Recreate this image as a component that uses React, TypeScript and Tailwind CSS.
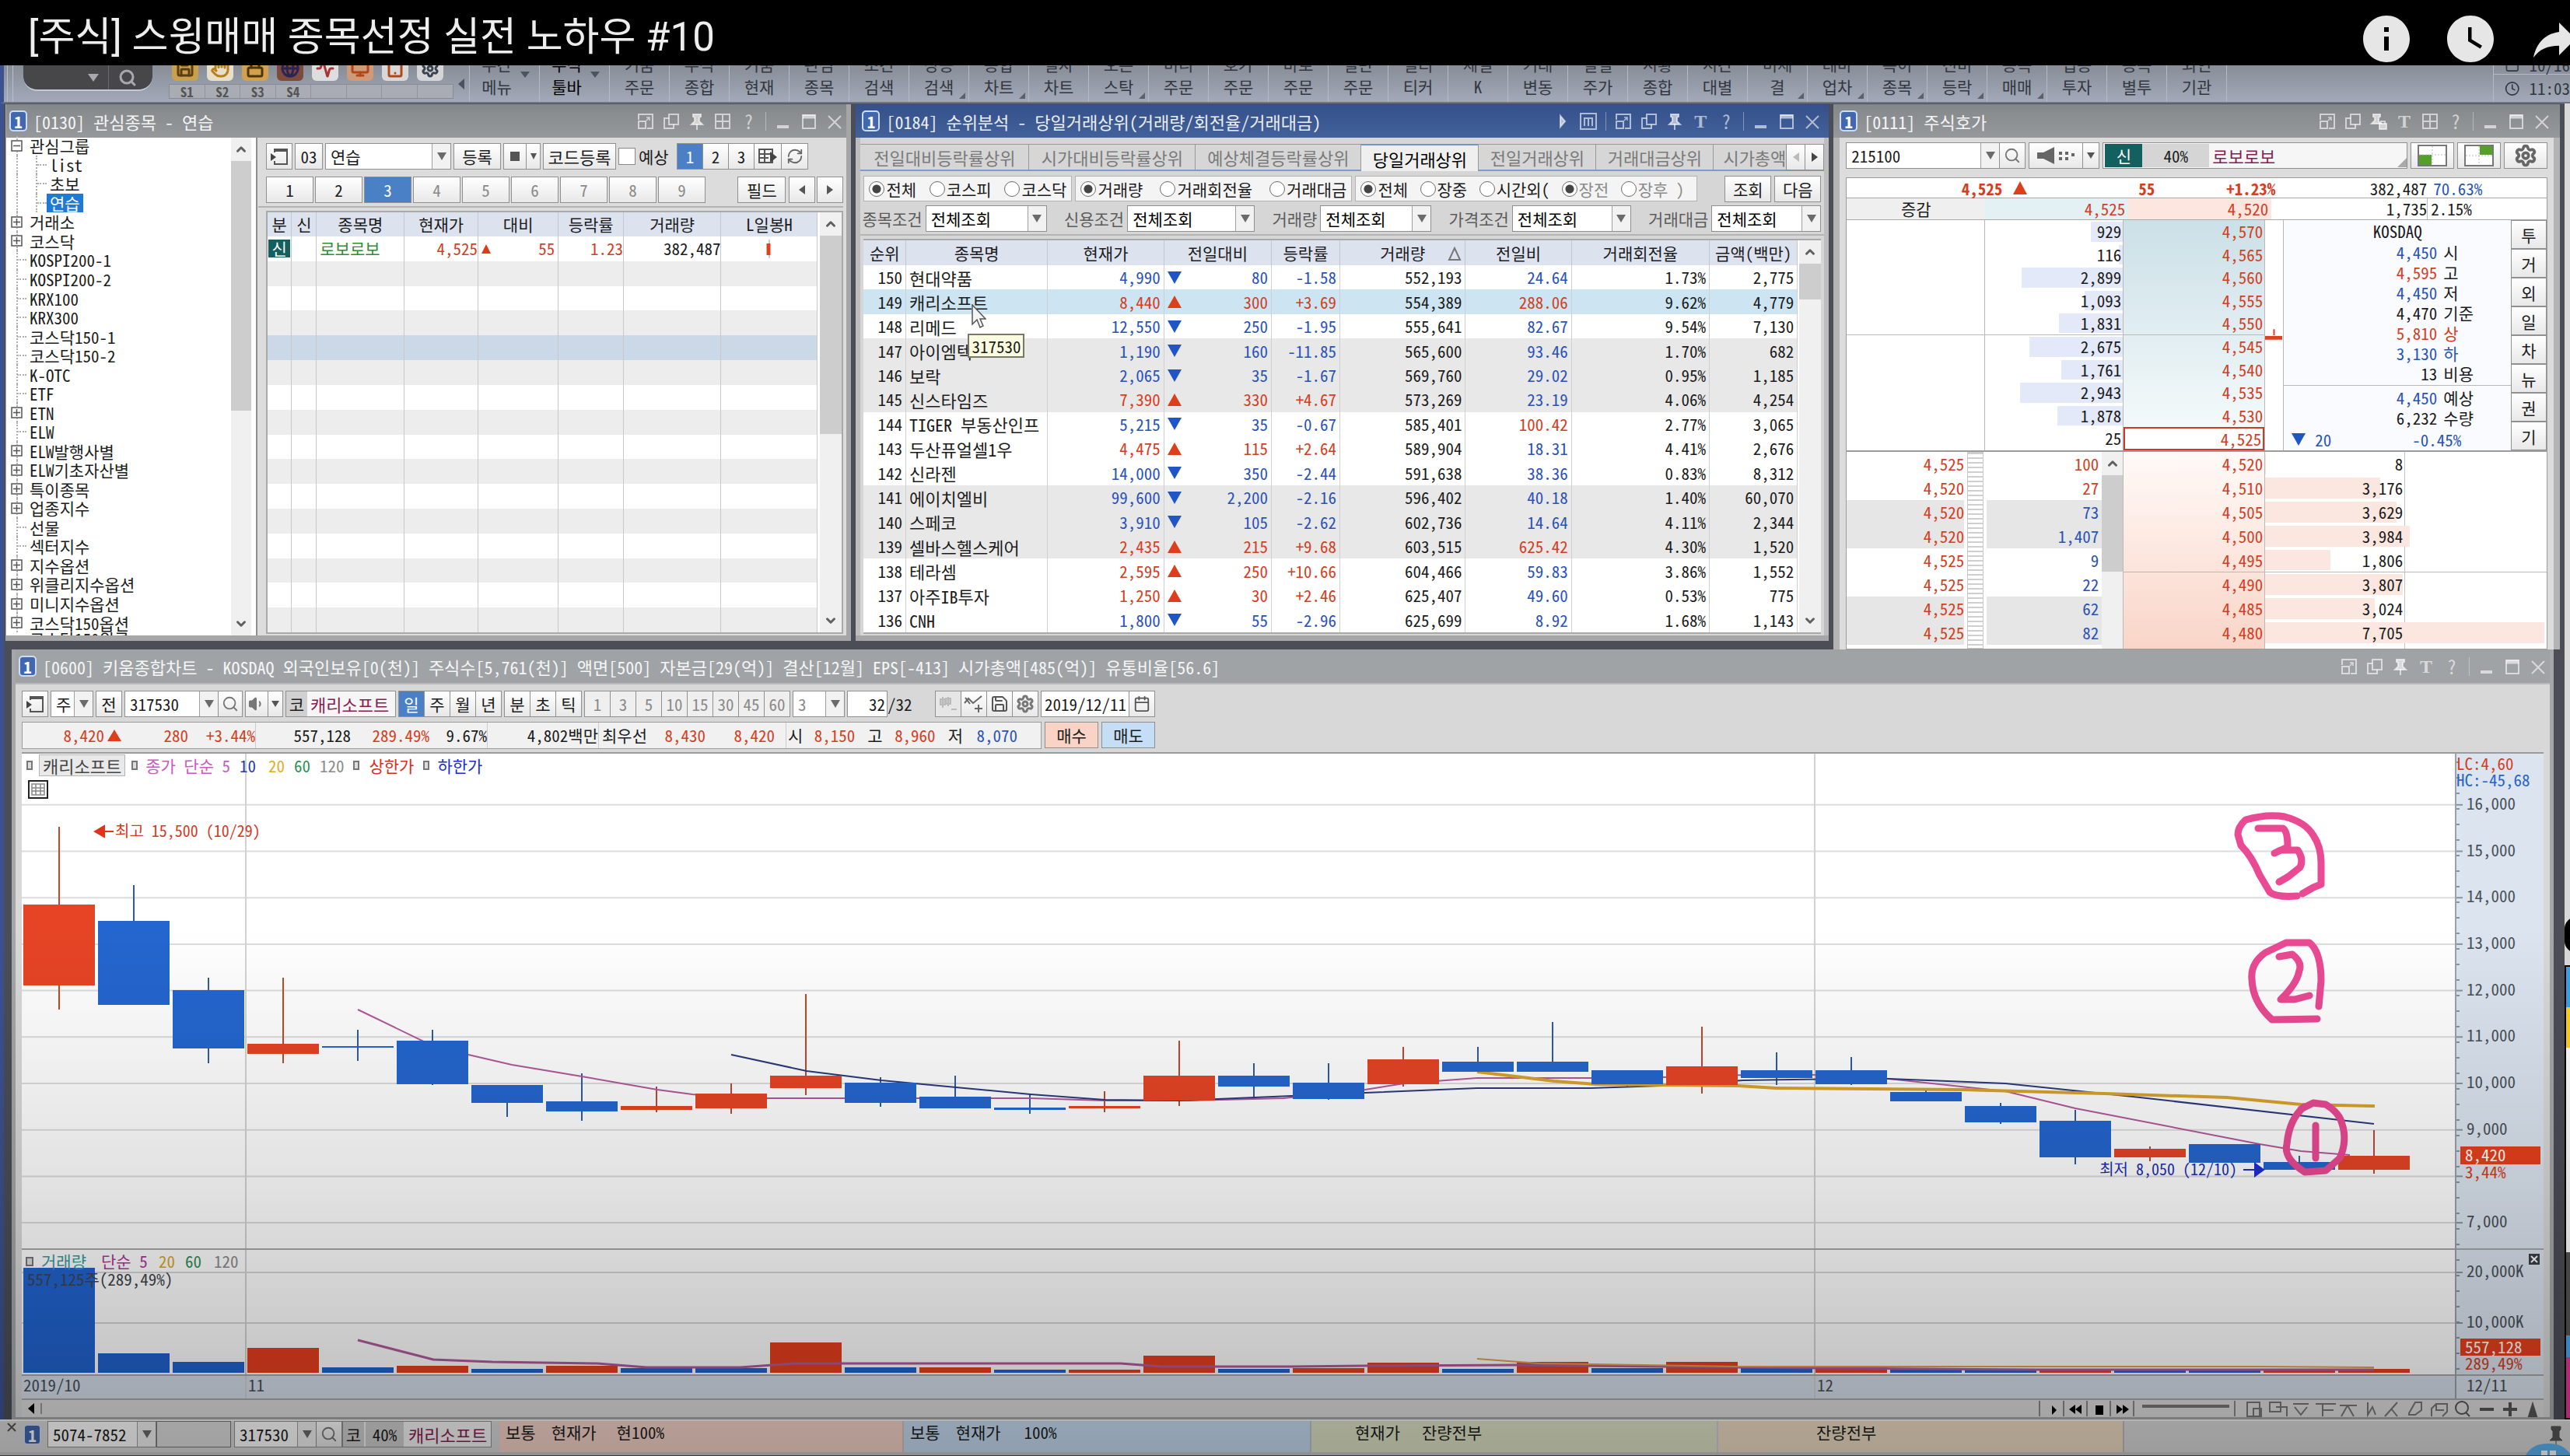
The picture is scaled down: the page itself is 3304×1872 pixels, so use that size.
import type { ReactNode } from 'react'
import clsx from 'clsx'
import {
  Activity, Calendar, ChevronDown, ChevronUp, Clock, Globe, Hand, Lock, Monitor,
  RefreshCw, Save, Search, Settings, Tablet, Volume1,
} from 'lucide-react'
import { MdInfo, MdWatchLater } from 'react-icons/md'

const RED = 'text-[#d2401f]'
const BLUE = 'text-[#2a53b8]'

/* ---------- shared controls ---------- */

function Btn({ className, label, children }: { className?: string; label?: string; children?: ReactNode }) {
  return (
    <button
      aria-label={label}
      className={clsx('flex h-[34px] shrink-0 items-center justify-center overflow-hidden whitespace-nowrap border border-[#909090]', className)}
    >
      {children}
    </button>
  )
}

const face = 'bg-gradient-to-b from-white to-[#e8e8e8]'

function Tri({ dir = 'down', className }: { dir?: 'up' | 'down' | 'left' | 'right'; className?: string }) {
  const d = {
    up: 'M0 10 L5 0 L10 10z',
    down: 'M0 0 L10 0 L5 10z',
    left: 'M10 0 L10 10 L0 5z',
    right: 'M0 0 L10 5 L0 10z',
  }[dir]
  return (
    <svg viewBox="0 0 10 10" preserveAspectRatio="none" className={clsx('shrink-0', className)}>
      <path d={d} fill="currentColor" />
    </svg>
  )
}

function Combo({ label, value, className }: { label: string; value: string; className?: string }) {
  return (
    <div className={clsx('flex h-[34px] shrink-0 border border-[#909090] bg-white', className)}>
      <select aria-label={label} className="min-w-0 flex-1 appearance-none overflow-hidden bg-transparent pl-1.5 outline-none">
        <option>{value}</option>
      </select>
      <span className="flex w-6 shrink-0 items-center justify-center border-l border-[#a0a0a0] bg-[#f2f2f2] text-[#6b6b6b]">
        <Tri className="h-2.5 w-3" />
      </span>
    </div>
  )
}

function Radio({ name, label, checked, muted }: { name: string; label: string; checked?: boolean; muted?: boolean }) {
  return (
    <label className={clsx('flex items-center gap-0.5 whitespace-nowrap', muted && 'text-[#8b8b8b]')}>
      <input
        type="radio"
        name={name}
        defaultChecked={checked}
        className="size-5 shrink-0 appearance-none rounded-full border border-[#6b6b6b] bg-white checked:bg-[radial-gradient(circle,#444_0_5px,#fff_6px)]"
      />
      {label}
    </label>
  )
}

function ScrollBar({ thumb, className }: { thumb: string; className?: string }) {
  return (
    <div className={clsx('flex shrink-0 flex-col bg-[#f0f0f0] text-[#606060]', className)}>
      <div className="flex h-[30px] items-center justify-center"><ChevronUp size={18} strokeWidth={4} /></div>
      <div className={clsx('w-full bg-[#cdcdcd]', thumb)} />
      <div className="mt-auto flex h-[30px] items-center justify-center"><ChevronDown size={18} strokeWidth={4} /></div>
    </div>
  )
}

function Badge() {
  return (
    <span className="flex h-[27px] w-[23px] shrink-0 items-center justify-center rounded-[5px] border-2 border-[#cfdcf2] bg-[#4068b0] font-bold text-white">
      1
    </span>
  )
}

type WinIconName = 'dock' | 'copy' | 'pin' | 'lockpin' | 'grid' | 'help' | 'text' | 'sep' | 'min' | 'max' | 'close' | 'm' | 'play'

function WinIcon({ name }: { name: WinIconName }) {
  if (name === 'sep') return <span className="h-6 w-px bg-current opacity-60" />
  if (name === 'help') return <button className="w-[22px] text-center text-2xl leading-6">?</button>
  if (name === 'text') return <button className="w-[22px] text-center font-['Liberation_Serif',serif] text-2xl leading-6 font-bold">T</button>
  const shapes: Record<string, ReactNode> = {
    dock: <><path d="M2 9V2h18v18h-7" /><path d="M2 11h9v9H2z" /><path d="M12 10l4-4m-4 0h4v4" strokeWidth="1.5" /></>,
    copy: <><path d="M8 2h12v13H8z" /><path d="M8 7H2v13h12v-5" /></>,
    pin: <><path d="M6 2h10v3l-2 1v5l4 4H4l4-4V6L6 5z" fill="currentColor" /><path d="M11 14v8" /></>,
    lockpin: <><path d="M4 2h9v3l-2 1v5l3 3H2l4-4V6L4 5z" fill="currentColor" /><path d="M12 14h9v7h-9z" fill="currentColor" /><path d="M14 14v-3h5v3" /></>,
    grid: <path d="M2 2h18v18H2zM11 2v18M2 11h18" />,
    min: <path d="M3 18h15" strokeWidth="4" />,
    max: <><path d="M3 3h16v17H3z" /><path d="M3 5h16" strokeWidth="5" /></>,
    close: <path d="M3 4l16 16M19 4L3 20" />,
    m: <><path d="M1 1h20v20H1z" /><path d="M6 17V7h10v10M11 7v10" /></>,
    play: <path d="M8 4l6 7-6 7z" fill="currentColor" />,
  }
  return (
    <button aria-label={name}>
      <svg width="22" height="22" viewBox="0 0 22 22" fill="none" stroke="currentColor" strokeWidth="2">{shapes[name]}</svg>
    </button>
  )
}

function TitleBar({ title, icons, className }: { title: string; icons: WinIconName[]; className: string }) {
  return (
    <div className={clsx('flex shrink-0 items-center gap-2 text-white/90', className)}>
      <Badge />
      <h2 className="text-[22px] whitespace-nowrap">{title}</h2>
      <div className="ml-auto flex items-center gap-[11px] text-white/60">
        {icons.map((n, i) => <WinIcon key={i} name={n} />)}
      </div>
    </div>
  )
}

/* ---------- video title and application toolbar ---------- */

function VideoHeader() {
  return (
    <header className="flex h-[84px] items-center overflow-hidden bg-black pl-9 text-[#eeeeee]">
      <h1 className="pt-3 font-[Roboto,'Noto_Sans_CJK_KR',sans-serif] text-[51px] leading-[76px] whitespace-nowrap">[주식] 스윙매매 종목선정 실전 노하우 #10</h1>
      <div className="mt-4 -mr-4 ml-auto flex shrink-0 gap-9 text-[#e6e6e6]">
        <button aria-label="info"><MdInfo size={72} /></button>
        <button aria-label="watch later"><MdWatchLater size={72} /></button>
        <button aria-label="share">
          <svg width="72" height="72" viewBox="0 0 24 24" fill="currentColor">
            <path d="M14 9V5l7 7-7 7v-4.1c-5 0-8.5 1.6-11 5.1 1-5 4-10 11-11z" />
          </svg>
        </button>
      </div>
    </header>
  )
}

const menus: [string, string, boolean?][] = [
  ['키움', '주문'], ['주식', '종합'], ['키움', '현재'], ['관심', '종목'],
  ['조건', '검색'], ['상승', '검색', true], ['종합', '차트', true], ['일자', '차트'], ['오픈', '스탁', true],
  ['미니', '주문'], ['호가', '주문'], ['바로', '주문'], ['일반', '주문'], ['멀티', '티커'], ['체결', 'K'],
  ['거래', '변동'], ['일별', '주가'], ['시황', '종합'], ['시간', '대별'], ['미체', '결', true], ['테마', '업차', true],
  ['특이', '종목', true], ['전비', '등락', true], ['종목', '매매', true], ['업종', '투자'], ['종목', '별투'], ['외인', '기관'],
]

const quick = [
  { icon: Save, cls: 'bg-[#c9a04e] text-[#5c3d10]' },
  { icon: Hand, cls: 'bg-[#e8dfc8] text-[#b8801d]' },
  { icon: Lock, cls: 'bg-[#d1a14c] text-[#4f340b]' },
  { icon: Globe, cls: 'bg-[#7d4b3c] text-[#2b2454]' },
  { icon: Activity, cls: 'bg-[#dedede] text-[#a33]' },
  { icon: Monitor, cls: 'bg-[#cf9a78] text-[#b0461b]' },
  { icon: Tablet, cls: 'bg-[#d8d8d8] text-[#b0461b]' },
  { icon: Settings, cls: 'bg-[#d5d5d5] text-[#3c4350]' },
]

function AppToolbar() {
  return (
    <nav className="flex h-[49px] overflow-hidden border-b-2 border-l-[5px] border-b-[#6f7682] border-l-[#3c5190] bg-gradient-to-b from-[#888d97] to-[#a2a9b9] text-[#33373f]">
      <div className="ml-1 w-2 border-x border-[#b9bfca]" />
      <div className="ml-[13px] flex h-[33px] w-[166px] items-center justify-end gap-3 rounded-b-[18px] border-b-2 border-[#c3c8d2] bg-[#47474a] pr-5 text-[#a9a9ad]">
        <Tri className="h-2.5 w-3.5" />
        <span className="h-full w-px bg-[#6a6a6e]" />
        <Search size={24} strokeWidth={3} />
      </div>
      <div className="ml-[21px] flex w-[366px] flex-col justify-end pb-1">
        <div className="flex h-[34px] shrink-0 gap-[11px] pl-1">
          {quick.map(({ icon: Icon, cls }, i) => (
            <span key={i} className={clsx('flex size-[34px] items-end justify-center rounded-md pb-1', cls)}>
              <Icon size={24} strokeWidth={3} />
            </span>
          ))}
        </div>
        <div className="mt-1 grid h-[19px] shrink-0 grid-cols-8 divide-x divide-[#8f949d] border border-[#868b94] bg-[#a9adb3] text-center text-[17px] leading-[17px] font-bold text-[#555]">
          {['S1', 'S2', 'S3', 'S4', '', '', '', ''].map((s, i) => <span key={i}>{s}</span>)}
        </div>
      </div>
      <div className="flex w-5 items-center justify-center text-[#4b5261]"><Tri dir="left" className="h-3.5 w-2" /></div>
      {['주간메뉴', '주식툴바'].map((m) => (
        <button key={m} className="flex w-[90px] shrink-0 justify-center gap-2 border-l border-[#b4bac6]">
          <span className={clsx('flex h-full w-11 flex-col justify-end pb-[5px] leading-[29px]', m === '주식툴바' && 'text-black')}>
            <span>{m.slice(0, 2)}</span>
            <span>{m.slice(2)}</span>
          </span>
          <Tri className="mt-2 h-2 w-3 text-[#4b5261]" />
        </button>
      ))}
      {menus.map(([a, b, more], i) => (
        <button key={i} className="relative flex w-[77px] shrink-0 flex-col items-center justify-end border-l border-[#b4bac6] pb-[5px] leading-[29px]">
          <span>{a}</span>
          <span>{b}</span>
          {more && <span className="absolute right-1 bottom-1 border-4 border-t-transparent border-r-[#5a606c] border-b-[#5a606c] border-l-transparent" />}
        </button>
      ))}
      <div className="flex-1 border-l border-[#b4bac6]" />
      <div className="flex w-[99px] shrink-0 flex-col justify-end overflow-hidden border-l border-[#b4bac6] whitespace-nowrap">
        <span className="flex items-center gap-3 border-b border-[#b4bac6] pl-3.5 leading-6"><Calendar size={24} />10/16</span>
        <span className="flex items-center gap-3 pl-3.5 leading-[35px]"><Clock size={26} />11:03</span>
      </div>
    </nav>
  )
}

/* ---------- [0130] watch list ---------- */

const tree: { t: string; kind?: 'open' | 'plus' | 'child'; on?: boolean }[] = [
  { t: '관심그룹', kind: 'open' },
  { t: 'list', kind: 'child' },
  { t: '초보', kind: 'child' },
  { t: '연습', kind: 'child', on: true },
  { t: '거래소', kind: 'plus' },
  { t: '코스닥', kind: 'plus' },
  { t: 'KOSPI200-1' },
  { t: 'KOSPI200-2' },
  { t: 'KRX100' },
  { t: 'KRX300' },
  { t: '코스닥150-1' },
  { t: '코스닥150-2' },
  { t: 'K-OTC' },
  { t: 'ETF' },
  { t: 'ETN', kind: 'plus' },
  { t: 'ELW' },
  { t: 'ELW발행사별', kind: 'plus' },
  { t: 'ELW기초자산별', kind: 'plus' },
  { t: '특이종목', kind: 'plus' },
  { t: '업종지수', kind: 'plus' },
  { t: '선물' },
  { t: '섹터지수' },
  { t: '지수옵션', kind: 'plus' },
  { t: '위클리지수옵션', kind: 'plus' },
  { t: '미니지수옵션', kind: 'plus' },
  { t: '코스닥150옵션', kind: 'plus' },
]

function Tree() {
  return (
    <div className="flex w-[323px] shrink-0 border-r-2 border-[#8f8f8f] bg-white">
      <ul className="-mt-0.5 flex flex-1 flex-col overflow-hidden pl-1.5">
        {tree.map(({ t, kind, on }) => (
          <li key={t} className="flex flex-1 items-center leading-6">
            <span className="relative flex w-6 items-center self-stretch">
              <span className="absolute inset-y-0 left-[7px] border-l-2 border-dotted border-[#b0b0b0]" />
              {(kind === 'plus' || kind === 'open') ? (
                <svg width="15" height="15" viewBox="0 0 15 15" className="relative bg-white">
                  <path d={kind === 'plus' ? 'M1 1h13v13H1zM3 7.5h9M7.5 3v9' : 'M1 1h13v13H1zM3 7.5h9'} fill="none" stroke="#555" strokeWidth="1.5" />
                </svg>
              ) : kind !== 'child' && <span className="ml-2 w-3 border-t-2 border-dotted border-[#b0b0b0]" />}
            </span>
            {kind === 'child' && (
              <span className="ml-2 flex w-3.5 items-center self-stretch border-l-2 border-dotted border-[#b0b0b0]">
                <span className="w-3 border-t-2 border-dotted border-[#b0b0b0]" />
              </span>
            )}
            <button className={clsx('whitespace-nowrap', kind === 'child' && 'px-1', on && 'bg-[#1f7ad6] text-white')}>{t}</button>
          </li>
        ))}
        <li className="h-[4px] shrink-0 overflow-hidden pl-6 leading-4">코스닥150위클</li>
      </ul>
      <ScrollBar thumb="h-[321px]" className="mr-1.5 w-[26px]" />
    </div>
  )
}

function WatchList() {
  return (
    <section className="mb-[11px] flex min-h-0 flex-col overflow-hidden border-r-[6px] border-b-[7px] border-l border-[#a6a6a6] bg-[#dcdcdc]">
      <TitleBar
        title="[0130] 관심종목 - 연습"
        className="h-[43px] bg-gradient-to-b from-[#84888b] to-[#96999b] pr-1 pl-1"
        icons={['dock', 'copy', 'pin', 'grid', 'help', 'sep', 'min', 'max', 'close']}
      />
      <div className="flex min-h-0 flex-1">
        <Tree />
        <div className="flex min-w-0 flex-1 flex-col pt-[7px] pr-1 pl-[11px]">
          <div className="flex items-center gap-[3px]">
            <Btn label="패널" className={clsx('w-[34px]', face)}><PanelIcon /></Btn>
            <Btn className={clsx('w-9', face)}>03</Btn>
            <Combo label="관심그룹" value="연습" className="w-[162px]" />
            <Btn className={clsx('w-[61px]', face)}>등록</Btn>
            <div className="flex">
              <Btn label="색상" className={clsx('w-[30px]', face)}><span className="size-3 bg-[#555]" /></Btn>
              <Btn label="색상 선택" className={clsx('-ml-px w-[19px]', face)}><Tri className="h-2 w-2 text-[#555]" /></Btn>
            </div>
            <Btn className={clsx('w-[94px] text-[22px]', face)}>코드등록</Btn>
            <label className="flex w-[72px] items-center gap-1">
              <input type="checkbox" className="size-[22px] appearance-none border border-[#8a8a8a] bg-white" />
              예상
            </label>
            <div className="flex">
              <Btn className="w-[34px] bg-[#4a80c6] text-white">1</Btn>
              <Btn className={clsx('-ml-px w-[34px]', face)}>2</Btn>
              <Btn className={clsx('-ml-px w-[34px]', face)}>3</Btn>
              <Btn label="열" className={clsx('-ml-px w-[36px]', face)}><GridIcon /></Btn>
              <Btn label="새로고침" className={clsx('-ml-px w-[35px]', face)}><RefreshCw size={22} color="#666" /></Btn>
            </div>
          </div>
          <div className="mt-[9px] flex gap-0.5">
            {[1, 2, 3, 4, 5, 6, 7, 8, 9].map((n) => (
              <Btn key={n} className={clsx('w-[61px]', n === 3 ? 'bg-[#4a80c6] text-white' : face, n > 3 && 'text-[#8a8a8a]')}>{n}</Btn>
            ))}
            <Btn className={clsx('mr-0.5 ml-auto w-[62px]', face)}>필드</Btn>
            <Btn label="이전" className={clsx('w-[34px]', face)}><Tri dir="left" className="h-3 w-2 text-[#555]" /></Btn>
            <Btn label="다음" className={clsx('w-[34px]', face)}><Tri dir="right" className="h-3 w-2 text-[#555]" /></Btn>
          </div>
          <div className="mt-1 mb-1 -ml-2.5 border-t-2 border-[#b4b4b4]" />
          <div className="mb-0.5 flex min-h-0 flex-1 border-2 border-[#a9a9a9] bg-white">
            <table className="h-full flex-1 table-fixed border-collapse">
              <colgroup>
                <col className="w-[31px]" /><col className="w-8" /><col className="w-[114px]" /><col className="w-[95px]" />
                <col className="w-[104px]" /><col className="w-[84px]" /><col className="w-[126px]" /><col className="w-[125px]" />
              </colgroup>
              <thead>
                <tr className="h-[31px] bg-[#dde2ef]">
                  {['분', '신', '종목명', '현재가', '대비', '등락률', '거래량', 'L일봉H'].map((h) => (
                    <th key={h} className="border-r border-[#c4c8d2] p-0 leading-none font-normal">{h}</th>
                  ))}
                </tr>
              </thead>
              <tbody className="[&_td]:border-r [&_td]:border-[#c9c9c9] [&_td]:p-0 [&_td]:leading-none [&_tr]:h-[31px]">
                <tr>
                  <td><span className="mx-px flex h-[23px] items-center justify-center bg-[#14605f] text-white">신</span></td>
                  <td />
                  <td className="text-[#2f8f2f]"><span className="pl-1">로보로보</span></td>
                  <td className={clsx('text-right', RED)}>4,525</td>
                  <td className={RED}><span className="flex items-center justify-between px-1"><Tri dir="up" className="h-3 w-3" />55</span></td>
                  <td className={clsx('text-right', RED)}>1.23</td>
                  <td className="text-right">382,487</td>
                  <td>
                    <svg viewBox="0 0 10 28" className="mx-auto h-7 w-2.5"><path d="M5 2v24" stroke="#999" /><path d="M4 7v15" stroke="#d9431f" strokeWidth="5" /></svg>
                  </td>
                </tr>
                {Array.from({ length: 15 }, (_, i) => (
                  <tr key={i} className={clsx(i === 3 ? 'bg-[#cad8e8]' : i % 2 === 0 && 'bg-[#ededed]')}>
                    {Array.from({ length: 8 }, (_, j) => <td key={j} />)}
                  </tr>
                ))}
              </tbody>
            </table>
            <ScrollBar thumb="h-[255px]" className="ml-[3px] w-7" />
          </div>
        </div>
      </div>
    </section>
  )
}

function PanelIcon() {
  return (
    <svg width="24" height="24" viewBox="0 0 24 24" fill="none" stroke="#555" strokeWidth="2">
      <path d="M6 7V3h16v19H6v-4M6 5h16" /><path d="M1 8l7 5-7 5z" fill="#444" stroke="none" />
    </svg>
  )
}

function GridIcon() {
  return (
    <svg width="26" height="24" viewBox="0 0 26 24" fill="none" stroke="#555" strokeWidth="2">
      <path d="M2 3h17v17H2zM2 9h17M9 3v17M2 14h12" /><path d="M16 6l9 7-9 7z" fill="#444" stroke="none" />
    </svg>
  )
}

/* ---------- [0184] ranking ---------- */

// rank, name, price, change, rate, volume, vs. previous day, turnover, amount
const ranking: [number, string, string, string, string, string, string, string, string][] = [
  [150, '현대약품', '4,990', '80', '-1.58', '552,193', '24.64', '1.73%', '2,775'],
  [149, '캐리소프트', '8,440', '300', '+3.69', '554,389', '288.06', '9.62%', '4,779'],
  [148, '리메드', '12,550', '250', '-1.95', '555,641', '82.67', '9.54%', '7,130'],
  [147, '아이엠텍', '1,190', '160', '-11.85', '565,600', '93.46', '1.70%', '682'],
  [146, '보락', '2,065', '35', '-1.67', '569,760', '29.02', '0.95%', '1,185'],
  [145, '신스타임즈', '7,390', '330', '+4.67', '573,269', '23.19', '4.06%', '4,254'],
  [144, 'TIGER 부동산인프', '5,215', '35', '-0.67', '585,401', '100.42', '2.77%', '3,065'],
  [143, '두산퓨얼셀1우', '4,475', '115', '+2.64', '589,904', '18.31', '4.41%', '2,676'],
  [142, '신라젠', '14,000', '350', '-2.44', '591,638', '38.36', '0.83%', '8,312'],
  [141, '에이치엘비', '99,600', '2,200', '-2.16', '596,402', '40.18', '1.40%', '60,070'],
  [140, '스페코', '3,910', '105', '-2.62', '602,736', '14.64', '4.11%', '2,344'],
  [139, '셀바스헬스케어', '2,435', '215', '+9.68', '603,515', '625.42', '4.30%', '1,520'],
  [138, '테라셈', '2,595', '250', '+10.66', '604,466', '59.83', '3.86%', '1,552'],
  [137, '아주IB투자', '1,250', '30', '+2.46', '625,407', '49.60', '0.53%', '775'],
  [136, 'CNH', '1,800', '55', '-2.96', '625,699', '8.92', '1.68%', '1,143'],
]

const filters = [
  { label: '종목조건', w: 'w-[156px]' },
  { label: '신용조건', w: 'w-[164px]' },
  { label: '거래량', w: 'w-[143px]' },
  { label: '가격조건', w: 'w-[153px]' },
  { label: '거래대금', w: 'w-[141px]' },
]

function rankRowBg(rank: number) {
  if (rank === 149) return 'bg-[#cde5f2]'
  return Math.floor((150 - rank) / 3) % 2 ? 'bg-[#e8e8e8]' : 'bg-white'
}

function Ranking() {
  const tabs = [
    { t: '전일대비등락률상위', w: 'w-[217px]' },
    { t: '시가대비등락률상위', w: 'w-[214px]' },
    { t: '예상체결등락률상위', w: 'w-[213px]' },
    { t: '당일거래상위', w: 'w-[151px]' },
    { t: '전일거래상위', w: 'w-[151px]' },
    { t: '거래대금상위', w: 'w-[151px]' },
  ]
  return (
    <section className="mb-[11px] flex min-h-0 flex-col border-b-[7px] border-[#a6a6a6] bg-[#d6d6d6]">
      <TitleBar
        title="[0184] 순위분석 - 당일거래상위(거래량/회전율/거래대금)"
        className="h-[43px] bg-gradient-to-b from-[#35508a] to-[#42619a] pr-2.5 pl-2"
        icons={['play', 'm', 'sep', 'dock', 'copy', 'pin', 'text', 'help', 'sep', 'min', 'max', 'close']}
      />
      <div className="flex min-h-0 flex-1 flex-col border-x-[6px] border-[#bdbdbd] pt-2">
        <div className="flex h-[35px] border-b-2 border-[#7a9cca] text-[22px]">
          {tabs.map(({ t, w }) => (
            <button
              key={t}
              className={clsx('shrink-0 border-t border-r border-[#9a9a9a] whitespace-nowrap', w,
                t === '당일거래상위' ? '-mb-0.5 border-t-2 border-t-[#6b96cf] bg-[#efefef] text-black' : 'text-[#7a7a7a]')}
            >
              {t}
            </button>
          ))}
          <button className="flex-1 overflow-hidden border-t border-[#9a9a9a] pl-3 text-left whitespace-nowrap text-[#7a7a7a]">시가총액</button>
          <Btn label="탭 이전" className={clsx('w-[25px]', face)}><Tri dir="left" className="h-3 w-2 text-[#bbb]" /></Btn>
          <Btn label="탭 다음" className={clsx('-ml-px w-[25px]', face)}><Tri dir="right" className="h-3 w-2 text-[#444]" /></Btn>
        </div>
        <div className="flex h-[45px] items-center gap-1 px-1">
          <fieldset className="flex h-[33px] w-[268px] items-center justify-between border border-[#b3b3b3] bg-[#f4f4f4] px-1.5">
            <Radio name="market" label="전체" checked />
            <Radio name="market" label="코스피" />
            <Radio name="market" label="코스닥" />
          </fieldset>
          <fieldset className="flex h-[33px] w-[356px] items-center justify-between border border-[#b3b3b3] bg-[#f4f4f4] px-1.5">
            <Radio name="by" label="거래량" checked />
            <Radio name="by" label="거래회전율" />
            <Radio name="by" label="거래대금" />
          </fieldset>
          <fieldset className="flex h-[33px] w-[440px] items-center justify-between border border-[#b3b3b3] bg-[#f4f4f4] pr-4 pl-1.5">
            <Radio name="time" label="전체" checked />
            <Radio name="time" label="장중" />
            <Radio name="time" label="시간외(" />
            <Radio name="after" label="장전" checked muted />
            <Radio name="after" label="장후 )" muted />
          </fieldset>
          <Btn className={clsx('ml-auto w-[60px]', face)}>조회</Btn>
          <Btn className={clsx('w-[60px]', face)}>다음</Btn>
        </div>
        <div className="flex h-8 items-center justify-between pr-1 pl-0.5 text-[#5c5c5c]">
          {filters.map(({ label, w }) => (
            <div key={label} className="flex items-center gap-1">
              <span className="whitespace-nowrap">{label}</span>
              <Combo label={label} value="전체조회" className={clsx('text-black', w)} />
            </div>
          ))}
        </div>
        <div className="mt-1 mb-1 border-t-2 border-[#b4b4b4]" />
        <div className="relative mx-1 mb-0.5 flex min-h-0 flex-1 border-y-2 border-[#a9a9a9] bg-white">
          <table className="h-full flex-1 table-fixed border-collapse">
            <colgroup>
              <col className="w-[54px]" /><col className="w-[182px]" /><col className="w-[149px]" /><col className="w-[138px]" />
              <col className="w-[88px]" /><col className="w-[161px]" /><col className="w-[136px]" /><col className="w-[177px]" /><col className="w-[113px]" />
            </colgroup>
            <thead>
              <tr className="h-8 bg-[#dde2ef]">
                {['순위', '종목명', '현재가', '전일대비', '등락률', '거래량', '전일비', '거래회전율', '금액(백만)'].map((h) => (
                  <th key={h} className="relative border-r border-[#c4c8d2] p-0 leading-none font-normal whitespace-nowrap">
                    {h}
                    {h === '거래량' && (
                      <svg viewBox="0 0 18 18" className="absolute top-2 right-1 size-[18px]"><path d="M9 2l7 15H2z" fill="none" stroke="#777" strokeWidth="2" /></svg>
                    )}
                  </th>
                ))}
              </tr>
            </thead>
            <tbody className="[&_td]:border-r [&_td]:border-[#cfcfcf] [&_td]:p-0 [&_td]:pr-1 [&_td]:text-right [&_td]:leading-none [&_td]:whitespace-nowrap [&_tr]:h-[31px]">
              {ranking.map(([rank, name, price, diff, rate, vol, prev, turn, amt]) => {
                const up = rate.startsWith('+')
                const cls = up ? RED : BLUE
                return (
                  <tr key={rank} className={rankRowBg(rank)}>
                    <td>{rank}</td>
                    <td><span className="block pl-1 text-left text-[22px] leading-6">{name}</span></td>
                    <td className={cls}>{price}</td>
                    <td className={cls}>
                      <span className="flex items-center justify-between pl-1">
                        <Tri dir={up ? 'up' : 'down'} className={clsx('h-4 w-[18px]', up ? 'text-[#dd3f1a]' : 'text-[#1f55c4]')} />
                        {diff}
                      </span>
                    </td>
                    <td className={cls}>{rate}</td>
                    <td>{vol}</td>
                    <td className={parseFloat(prev) >= 100 ? RED : BLUE}>{prev}</td>
                    <td>{turn}</td>
                    <td>{amt}</td>
                  </tr>
                )
              })}
            </tbody>
          </table>
          <ScrollBar thumb="h-[46px]" className="ml-0.5 w-7" />
          {/* hovered row: code tooltip and pointer */}
          <span className="absolute top-[120px] left-[134px] flex h-[31px] w-[73px] items-center justify-center border-2 border-[#77776a] bg-[#fbfbdf]">317530</span>
          <svg viewBox="0 0 20 32" className="absolute top-[82px] left-[138px] h-8 w-5"><path d="M2 1v25l6-6 4 10 4-2-4-9h7z" fill="#f4f4f4" stroke="#555" strokeWidth="1.5" /></svg>
        </div>
      </div>
    </section>
  )
}

/* ---------- [0111] order book ---------- */

const asks: [string, string][] = [
  ['929', '4,570'], ['116', '4,565'], ['2,899', '4,560'], ['1,093', '4,555'], ['1,831', '4,550'],
  ['2,675', '4,545'], ['1,761', '4,540'], ['2,943', '4,535'], ['1,878', '4,530'], ['25', '4,525'],
]
const bids: [string, string][] = [
  ['4,520', '8'], ['4,510', '3,176'], ['4,505', '3,629'], ['4,500', '3,984'],
  ['4,495', '1,806'], ['4,490', '3,807'], ['4,485', '3,024'], ['4,480', '7,705'],
]
const ticks: [string, string, boolean][] = [
  ['4,525', '100', true], ['4,520', '27', true], ['4,520', '73', false], ['4,520', '1,407', false],
  ['4,525', '9', false], ['4,525', '22', false], ['4,525', '62', false], ['4,525', '82', false],
]
const quotes: [string, string, string][] = [
  ['4,450', '시', BLUE], ['4,595', '고', RED], ['4,450', '저', BLUE], ['4,470', '기준', ''],
  ['5,810', '상', RED], ['3,130', '하', BLUE], ['13', '비용', ''],
]
const num = (s: string) => Number(s.replace(/,/g, ''))

function OrderBook() {
  return (
    <section className="flex min-h-0 flex-col overflow-hidden border-[#a6a6a6] bg-[#dcdcdc]">
      <TitleBar
        title="[0111] 주식호가"
        className="h-[43px] bg-gradient-to-b from-[#84888b] to-[#96999b] pr-3 pl-2"
        icons={['dock', 'copy', 'lockpin', 'text', 'grid', 'help', 'sep', 'min', 'max', 'close']}
      />
      <div className="flex min-h-0 flex-1 flex-col border-x-[8px] border-[#b4b4b4] px-2 pt-1.5">
        <div className="flex gap-1">
          <div className="flex">
            <Combo label="종목코드" value="215100" className="w-[198px]" />
            <Btn label="검색" className={clsx('-ml-px w-[34px]', face)}><Search size={22} color="#777" /></Btn>
          </div>
          <div className="flex">
            <Btn label="소리" className={clsx('w-[70px]', face)}>
              <svg width="50" height="24" viewBox="0 0 50 24" fill="#666"><path d="M1 8h8L23 1v22L9 16H1z" /><path d="M29 7h4v4h-4zM29 14h4v4h-4zM37 7h4v4h-4zM37 14h4v4h-4zM45 9h4v4h-4z" /></svg>
            </Btn>
            <Btn label="소리 설정" className={clsx('-ml-px w-[22px]', face)}><Tri className="h-2 w-2.5 text-[#555]" /></Btn>
          </div>
          <div className="flex h-[34px] flex-1 items-center border border-[#909090] bg-[#f6f6f6] py-px pl-0.5">
            <span className="flex h-full w-12 items-center justify-center bg-[#14605f] text-white">신</span>
            <span className="flex h-full w-[86px] items-center justify-center bg-[#d5d5d5]">40%</span>
            <span className="pl-1 text-[22px] text-[#8a1c53]">로보로보</span>
            <span className="ml-auto self-end border-[6px] border-t-transparent border-r-[#aaa] border-b-[#aaa] border-l-transparent" />
          </div>
          <Btn label="좌측 배치" className={clsx('w-[56px]', face)}>
            <svg width="38" height="28" viewBox="0 0 38 28"><path d="M1 1h36v26H1z" fill="#fff" stroke="#777" strokeWidth="2" /><path d="M2 13h16v13H2z" fill="#55a02a" /><path d="M19 2v24M2 13h34" stroke="#bbb" strokeDasharray="2 2" /></svg>
          </Btn>
          <Btn label="우측 배치" className={clsx('w-[56px]', face)}>
            <svg width="38" height="28" viewBox="0 0 38 28"><path d="M1 1h36v26H1z" fill="#fff" stroke="#777" strokeWidth="2" /><path d="M20 2h16v11H20z" fill="#55a02a" /><path d="M19 2v24M2 14h34" stroke="#bbb" strokeDasharray="2 2" /></svg>
          </Btn>
          <Btn label="설정" className={clsx('w-[56px]', face)}><Settings size={30} strokeWidth={3} color="#666" /></Btn>
        </div>

        <div className="mt-[11px] flex min-h-0 flex-1 flex-col border border-[#9c9c9c] bg-white">
          <div className="flex h-[26px] shrink-0 items-center border-b border-[#a8a8a8] leading-6">
            <span className={clsx('w-[200px] text-right font-bold', RED)}>4,525</span>
            <Tri dir="up" className="ml-3.5 h-[17px] w-[18px] text-[#dd3f1a]" />
            <span className={clsx('w-[164px] text-right font-bold', RED)}>55</span>
            <span className={clsx('w-[155px] text-right font-bold', RED)}>+1.23%</span>
            <span className="w-[195px] text-right">382,487</span>
            <span className={clsx('pl-2', BLUE)}>70.63%</span>
          </div>
          <div className="flex h-7 shrink-0 border-b border-[#a8a8a8] leading-[27px]">
            <span className="w-[178px] bg-[#efefef] text-center">증감</span>
            <span className={clsx('w-[184px] bg-[#e3f0f4] pr-1 text-right', RED)}>4,525</span>
            <span className={clsx('w-[184px] bg-[#fde6dd] pr-1 text-right', RED)}>4,520</span>
            <span className="w-[201px] border-r border-[#bbb] text-right">1,735</span>
            <span className="pl-1">2.15%</span>
          </div>

          {/* asks */}
          <div className="flex h-[298px] shrink-0 border-b-2 border-[#9c9c9c]">
            <div className="grid w-[178px] grid-rows-2 divide-y divide-[#b9b9b9] border-r border-[#b9b9b9]"><span /><span /></div>
            <div className="grid w-[177px] grid-rows-10">
              {asks.map(([v], i) => (
                <div key={v} className={clsx('relative text-right', i === 4 && 'border-b border-[#b9b9b9]')}>
                  <span className="absolute inset-y-0.5 right-0 bg-[#e3e9f9]" style={{ width: num(v) * 0.045 }} />
                  <span className="relative pr-0.5">{v}</span>
                </div>
              ))}
            </div>
            <div className={clsx('grid w-[183px] grid-rows-10 border-x border-[#b9b9b9] bg-gradient-to-b from-[#cbe0e7] to-[#f8fcfd] text-right', RED)}>
              {asks.map(([, p], i) => (
                <span key={p} className={clsx('pr-0.5', i === 9 && 'border-2 border-[#cf3a22] bg-white leading-[26px]', i === 4 && 'border-b border-[#b9b9b9]')}>{p}</span>
              ))}
            </div>
            <div className="flex w-6 items-center border-r border-[#b9b9b9]">
              <svg viewBox="0 0 24 16" className="h-4 w-6"><path d="M12 0v8" stroke="#cf3a22" strokeWidth="2" /><path d="M0 9h23v5H0z" fill="#d9431f" /></svg>
            </div>
            <div className="flex flex-1 flex-col bg-[#f9fbfe] leading-[26px]">
              <span className="text-center leading-7">KOSDAQ</span>
              {quotes.map(([v, l, cls]) => (
                <div key={l} className="flex gap-2">
                  <span className={clsx('w-[197px] text-right', l !== '비용' && cls)}>{v}</span>
                  <span className={l === '상' || l === '하' ? cls : ''}>{l}</span>
                </div>
              ))}
              <div className="mt-0.5 flex gap-2 border-t border-[#b9b9b9] pt-0.5">
                <span className={clsx('w-[197px] text-right', BLUE)}>4,450</span>예상
              </div>
              <div className="flex gap-2"><span className="w-[197px] text-right">6,232</span>수량</div>
              <div className={clsx('mt-0.5 flex items-center', BLUE)}>
                <Tri className="ml-2.5 h-4 w-[18px] text-[#1f55c4]" />
                <span className="ml-3">20</span>
                <span className="ml-[104px]">-0.45%</span>
              </div>
            </div>
            <div className="flex w-[46px] flex-col">
              {['투', '거', '외', '일', '차', '뉴', '권', '기'].map((t) => (
                <button key={t} className={clsx('flex-1 border border-[#909090]', face)}>{t}</button>
              ))}
            </div>
          </div>

          {/* executions and bids */}
          <div className="flex min-h-0 flex-1 overflow-hidden">
            <div className="flex w-[151px] shrink-0 flex-col">
              {ticks.map(([p], i) => (
                <span key={i} className={clsx('h-[31px] shrink-0 text-right leading-[31px]', RED, Math.floor(i / 2) % 2 === 1 && 'bg-[#e6e6e6]')}>{p}</span>
              ))}
            </div>
            <div className="mx-1 w-[21px] shrink-0 border border-[#c9c9c9] bg-[repeating-linear-gradient(#cfcfcf_0_2px,#fff_2px_6px)]" />
            <div className="flex w-[148px] shrink-0 flex-col">
              {ticks.map(([, q, up], i) => (
                <span key={i} className={clsx('h-[31px] shrink-0 pr-1 text-right leading-[31px]', up ? RED : BLUE, Math.floor(i / 2) % 2 === 1 && 'bg-[#e6e6e6]')}>{q}</span>
              ))}
            </div>
            <div className="flex w-[27px] shrink-0 flex-col bg-[#f0f0f0] text-[#606060]">
              <div className="flex h-[30px] items-center justify-center"><ChevronUp size={18} strokeWidth={4} /></div>
              <div className="h-[124px] bg-[#cdcdcd]" />
            </div>
            <div className={clsx('w-[183px] shrink-0 border-x border-[#b9b9b9] bg-gradient-to-b from-[#fffaf8] to-[#f9d5c8]', RED)}>
              {bids.map(([p], i) => (
                <span key={p} className={clsx('block h-[31px] pr-0.5 text-right leading-[31px]', i === 4 && 'border-b border-[#b9b9b9]')}>{p}</span>
              ))}
            </div>
            <div className="relative flex-1">
              <span className="absolute inset-y-0 left-[179px] border-l border-[#c4c4c4]" />
              {bids.map(([, v], i) => (
                <div key={v} className={clsx('relative h-[31px] leading-[31px]', i === 4 && 'border-b border-[#b9b9b9]')}>
                  <span className="absolute inset-y-0.5 left-0 max-w-full bg-[#fbe7df]" style={{ width: num(v) * 0.0465 }} />
                  <span className="relative block w-[177px] text-right">{v}</span>
                </div>
              ))}
            </div>
          </div>
        </div>
      </div>
    </section>
  )
}

/* ---------- [0600] chart ---------- */

// body top, body bottom, high, low, volume top, rising, volume rising
const candles: [number, number, number, number, number, boolean, boolean][] = [
  [1164, 1268, 1064, 1299, 1631, true, false],
  [1185, 1293, 1139, 1293, 1741, false, false],
  [1274, 1349, 1258, 1368, 1752, false, false],
  [1343, 1356, 1258, 1368, 1734, true, true],
  [1346, 1348, 1325, 1365, 1759, false, false],
  [1339, 1395, 1325, 1396, 1757, false, true],
  [1396, 1419, 1396, 1437, 1761, false, false],
  [1417, 1430, 1381, 1442, 1757, false, true],
  [1423, 1428, 1398, 1431, 1760, true, false],
  [1407, 1426, 1394, 1433, 1760, true, false],
  [1384, 1400, 1279, 1409, 1727, true, true],
  [1393, 1419, 1386, 1424, 1759, false, false],
  [1411, 1426, 1384, 1426, 1759, false, true],
  [1425, 1428, 1407, 1433, 1762, false, false],
  [1423, 1426, 1404, 1431, 1762, true, true],
  [1384, 1416, 1339, 1423, 1744, true, true],
  [1384, 1398, 1368, 1412, 1761, false, false],
  [1393, 1414, 1368, 1415, 1760, false, true],
  [1363, 1395, 1347, 1398, 1753, true, true],
  [1366, 1379, 1347, 1381, 1761, false, false],
  [1366, 1379, 1315, 1379, 1752, false, true],
  [1377, 1395, 1377, 1399, 1760, false, false],
  [1372, 1396, 1321, 1407, 1752, true, true],
  [1377, 1387, 1354, 1396, 1760, false, false],
  [1377, 1395, 1360, 1396, 1759, false, true],
  [1405, 1417, 1400, 1417, 1761, false, false],
  [1423, 1444, 1419, 1446, 1761, false, false],
  [1442, 1489, 1428, 1498, 1763, false, true],
  [1478, 1489, 1475, 1494, 1763, true, false],
  [1472, 1496, 1472, 1496, 1763, false, false],
  [1495, 1505, 1487, 1506, 1763, false, true],
  [1487, 1505, 1454, 1510, 1761, true, true],
]

const cx = (i: number) => 76 + i * 96
const yOf = (price: number) => 1394 + (10000 - price) * 0.0597

function Chart() {
  return (
    <svg viewBox="28 970 3242 829" className="block w-full text-[21px]">
      <rect x="28" y="970" width="3128" height="799" fill="#fff" />
      <rect x="3156" y="970" width="114" height="829" fill="#dbe4ef" />
      <rect x="28" y="1769" width="3128" height="30" fill="#d7e0ec" />
      {[16, 15, 14, 13, 12, 11, 10, 9, 8, 7].map((k) => (
        <g key={k}>
          <path d={`M28 ${yOf(k * 1000)}H3156`} stroke="#dcdcdc" strokeWidth="2" />
          <path d={`M3156 ${yOf(k * 1000)}h10`} stroke="#8a93a0" strokeWidth="2" />
          {k !== 8 && <text x="3171" y={yOf(k * 1000) + 6} fill="#4a5058">{k},000</text>}
        </g>
      ))}
      {[1637, 1702].map((y, i) => (
        <g key={y}>
          <path d={`M28 ${y}H3156`} stroke="#d6d6d6" strokeWidth="2" />
          <path d={`M3156 ${y}h10`} stroke="#8a93a0" strokeWidth="2" />
          <text x="3171" y={y + 6} fill="#4a5058">{i ? '10,000K' : '20,000K'}</text>
        </g>
      ))}
      <path d="M316 970V1799M2333 970V1799" stroke="#d2d2d2" strokeWidth="2" />
      <path d="M28 1607H3270M28 1769H3270" stroke="#a8a8a8" strokeWidth="2" />
      <path d="M3157 970V1799" stroke="#9aa2ad" strokeWidth="2" />
      <path d="M3160 980V1766" stroke="#8a93a0" strokeWidth="4" strokeDasharray="2 18" />

      {candles.map(([, , high, low, vol, up, volUp], i) => (
        <g key={i}>
          <path d={`M${cx(i)} ${high}V${low}`} stroke={up ? '#c0492c' : '#2a5cae'} strokeWidth="2" />
          <rect x={cx(i) - 46} y={vol} width="92" height={1766 - vol} fill={volUp ? '#e63f1e' : '#2163cf'} />
        </g>
      ))}

      <g fill="none" strokeWidth="2">
        <path stroke="#b25a9c" d="M460 1299L557 1346L602 1357L658 1370L748 1385L845 1402L890 1408L941 1413H1325L1420 1416H1530L1650 1413L1755 1402L1805 1394L1899 1387H2100L2285 1382L2381 1384L2428 1388L2578 1404L2668 1426L2905 1472L2958 1481L3021 1486" />
        <path stroke="#2c3a7c" d="M940 1357L1037 1378L1133 1390L1229 1399L1325 1408L1420 1415L1516 1416L1613 1412L1755 1406L1899 1400H2045L2135 1397L2241 1390L2381 1388H2428L2578 1394L2742 1411L3052 1446" />
        <path stroke="#d9a32c" strokeWidth="4" d="M1899 1379L1998 1391L2051 1395L2235 1397L2283 1400L2526 1402L2705 1407L2863 1412L2958 1421L3053 1423" />
        <path stroke="#b25a9c" strokeWidth="3" d="M460 1724L557 1749L633 1752L768 1754L831 1759H952L1020 1754H1441L1494 1758H1660L1755 1757L1948 1756L2235 1759L2620 1762H3052" />
        <path stroke="#e0a24a" d="M1899 1748L1979 1754L2235 1758H2905L3052 1759" />
      </g>

      {candles.map(([top, bottom, , , , up], i) => (
        <rect key={i} x={cx(i) - 46} y={top} width="92" height={bottom - top} fill={up ? '#e64425' : '#2466cf'} />
      ))}

      <path d="M122 1070l12-7v14zM130 1070h16" fill="#e23318" stroke="#e23318" strokeWidth="2" />
      <g className="text-[20px]">
        <text x="148" y="1077" fill="#d23a22">최고 15,500 (10/29)</text>
        <text x="2876" y="1512" textAnchor="end" fill="#1c2fb5">최저 8,050 (12/10)</text>
      </g>
      <path d="M2910 1505l-11-8v16zM2884 1505h18" fill="#1c2fd5" stroke="#1c2fd5" strokeWidth="2" />

      <text x="3158" y="991" fill="#d2401f">LC:4,60</text>
      <text x="3158" y="1012" fill="#2a63c8">HC:-45,68</text>
      <rect x="3163" y="1475" width="103" height="23" fill="#e8401c" />
      <text x="3169" y="1494" fill="#fff">8,420</text>
      <text x="3169" y="1516" fill="#d2401f">3,44%</text>
      <rect x="3163" y="1722" width="103" height="22" fill="#e8401c" />
      <text x="3169" y="1741" fill="#fff">557,128</text>
      <text x="3169" y="1762" fill="#d2401f">289,49%</text>
      <rect x="3251" y="1613" width="14" height="14" fill="#3b3f49" />
      <path d="M3254 1616l8 8m0-8l-8 8" stroke="#fff" strokeWidth="2" />

      <rect x="34" y="1618" width="8" height="10" fill="#ddd" stroke="#777" strokeWidth="2" />
      <text y="1631">
        <tspan x="53" fill="#3d9aa0">거래량</tspan>
        <tspan x="130" fill="#b0379b">단순 5</tspan>
        <tspan x="204" fill="#d8a62a">20</tspan>
        <tspan x="238" fill="#2e8f55">60</tspan>
        <tspan x="275" fill="#8a8a8a">120</tspan>
      </text>
      <text x="35" y="1654" fill="#3f444c">557,125주(289,49%)</text>
      <g fill="#4a5058">
        <text x="30" y="1790">2019/10</text>
        <text x="319" y="1790">11</text>
        <text x="2336" y="1790">12</text>
        <text x="3171" y="1790">12/11</text>
      </g>

      {/* pen marks */}
      <g fill="none" stroke="#ea4a93" strokeWidth="9" strokeLinecap="round" strokeLinejoin="round">
        <path d="M2881 1088L2877 1074Q2877 1064 2887 1055Q2915 1047 2937 1051Q2964 1058 2974 1075Q2984 1090 2984 1110V1138L2974 1142L2960 1150M2881 1088Q2895 1102 2905 1126L2918 1148Q2926 1155 2953 1153" />
        <path d="M2903 1066H2935Q2941 1070 2941 1090L2924 1098L2932 1094H2954Q2962 1106 2957 1116L2942 1128L2930 1135" />
        <path d="M2981 1295L2984 1262Q2984 1225 2969 1213H2939L2912 1226Q2893 1240 2895 1260Q2896 1290 2921 1312L2979 1311" />
        <path d="M2930 1231L2947 1228Q2960 1238 2956 1249Q2953 1266 2932 1286L2950 1286L2969 1281" />
        <path d="M2958 1427L2974 1419L2990 1421Q3008 1432 3011 1446Q3018 1468 3008 1490L2990 1506L2963 1508Q2935 1490 2940 1472Q2943 1440 2962 1424" />
        <path d="M2977 1448V1490" />
      </g>
    </svg>
  )
}

const side = 'flex -ml-px w-[34px]'

function ChartPanel() {
  return (
    <section className="mr-[14px] ml-2.5 flex flex-col border-x-[5px] border-b-[3px] border-[#a4a6a8] bg-[#d8d8d8]">
      <TitleBar
        title="[0600] 키움종합차트 - KOSDAQ 외국인보유[0(천)] 주식수[5,761(천)] 액면[500] 자본금[29(억)] 결산[12월] EPS[-413] 시가총액[485(억)] 유통비율[56.6]"
        className="h-[45px] border-b-2 border-[#b8babc] bg-[#9fa3a6] pr-1 pl-1"
        icons={['dock', 'copy', 'pin', 'text', 'help', 'sep', 'min', 'max', 'close']}
      />
      <div className="flex items-center gap-[3px] px-2 pt-2">
        <Btn label="패널" className={clsx('w-[34px]', face)}><PanelIcon /></Btn>
        <Combo label="주기" value="주" className="w-[55px]" />
        <Btn className={clsx('w-[34px]', face)}>전</Btn>
        <div className="flex">
          <Combo label="종목코드" value="317530" className="w-[121px]" />
          <Btn label="검색" className={clsx('-ml-px w-8', face)}><Search size={22} color="#777" /></Btn>
        </div>
        <div className="flex">
          <Btn label="소리" className={clsx('w-[30px]', face)}><Volume1 size={22} fill="#777" color="#777" /></Btn>
          <Btn label="소리 설정" className={clsx('-ml-px w-5', face)}><Tri className="h-2 w-2.5 text-[#555]" /></Btn>
        </div>
        <div className="flex h-[34px] w-[142px] items-center overflow-hidden border border-[#909090] bg-[#f6f6f6] whitespace-nowrap">
          <span className="flex h-full w-[27px] items-center justify-center bg-[#d0d0d0]">코</span>
          <span className="pl-1 text-[22px] text-[#8a1c53]">캐리소프트</span>
        </div>
        <div className="flex">
          <Btn className="w-[34px] bg-[#4a80c6] text-white">일</Btn>
          {['주', '월', '년'].map((t) => <Btn key={t} className={clsx(side, face)}>{t}</Btn>)}
        </div>
        <div className="flex pl-px">
          {['분', '초', '틱'].map((t) => <Btn key={t} className={clsx(side, face)}>{t}</Btn>)}
        </div>
        <div className="flex pl-px text-[#8a8a8a]">
          {[1, 3, 5, 10, 15, 30, 45, 60].map((t) => <Btn key={t} className={clsx(side, 'bg-[#efefef]')}>{t}</Btn>)}
        </div>
        <Combo label="분 단위" value="3" className="w-[67px] text-[#8a8a8a]" />
        <label className="flex w-[110px] items-center">
          <input defaultValue="32" aria-label="봉 개수" className="h-[34px] w-[52px] border border-[#909090] bg-white pr-0.5 text-right" />
          /32
        </label>
        <div className="flex">
          <Btn label="봉" className="w-[34px] bg-[#e6e6e6]">
            <svg width="24" height="24" viewBox="0 0 24 24" stroke="#bbb" strokeWidth="2" fill="#ccc"><path d="M5 3v14M12 3v12M2 6h6v7H2zM9 5h6v7H9zM16 19h7" /></svg>
          </Btn>
          <Btn label="지표 추가" className={clsx('-ml-px w-[34px]', face)}>
            <svg width="26" height="26" viewBox="0 0 26 26" stroke="#666" strokeWidth="2" fill="none"><path d="M1 12l5-6 6 6 11-9M2 5l6 8M19 14v10M14 19h10" /></svg>
          </Btn>
          <Btn label="저장" className={clsx('-ml-px w-[34px]', face)}><Save size={24} color="#555" /></Btn>
          <Btn label="설정" className={clsx('-ml-px w-[34px]', face)}><Settings size={24} strokeWidth={3} color="#777" /></Btn>
        </div>
        <div className="flex">
          <input defaultValue="2019/12/11" aria-label="날짜" className="h-[34px] w-[114px] border border-[#909090] bg-white pl-1" />
          <Btn label="달력" className={clsx('-ml-px w-[34px]', face)}><Calendar size={22} color="#555" /></Btn>
        </div>
      </div>
      <div className="flex gap-1 px-2 pt-1.5">
        <div className="flex h-[35px] w-[1311px] items-center border border-[#9c9c9c] bg-[#f1f1f1] leading-[33px]">
          <span className={clsx('w-[105px] text-right', RED)}>8,420</span>
          <Tri dir="up" className="ml-1 h-[15px] w-[18px] text-[#dd3f1a]" />
          <span className={clsx('w-[86px] text-right', RED)}>280</span>
          <span className={clsx('w-[87px] border-r border-[#ccc] text-right', RED)}>+3.44%</span>
          <span className="w-[122px] text-right">557,128</span>
          <span className={clsx('w-[101px] text-right', RED)}>289.49%</span>
          <span className="w-[75px] border-r border-[#ccc] text-right">9.67%</span>
          <span className="w-[143px] border-r border-[#ccc] text-right">4,802백만</span>
          <span className="pl-1">최우선</span>
          <span className={clsx('w-[75px] text-right', RED)}>8,430</span>
          <span className={clsx('w-[89px] text-right', RED)}>8,420</span>
          <span className="ml-3.5 border-l border-[#ccc] pl-0.5">시</span>
          <span className={clsx('w-[67px] text-right', RED)}>8,150</span>
          <span className="ml-4">고</span>
          <span className={clsx('w-[68px] text-right', RED)}>8,960</span>
          <span className="ml-4">저</span>
          <span className={clsx('w-[70px] text-right', BLUE)}>8,070</span>
        </div>
        <Btn className="w-[69px] bg-[#f8d3c6]">매수</Btn>
        <Btn className="w-[69px] bg-[#c5def5]">매도</Btn>
      </div>
      <div className="relative mx-2 mt-1 border-t-2 border-[#9c9c9c]">
        <Chart />
        {/* price legend */}
        <div className="absolute top-0 left-1.5 flex h-[30px] items-center gap-2">
          <i className="h-3 w-2 border-2 border-[#777] bg-[#ddd]" />
          <span className="border border-[#b5b5b5] bg-[#e9e9e9] px-1 text-[22px] leading-[26px] text-[#444]">캐리소프트</span>
          <i className="h-3 w-2 border-2 border-[#777] bg-[#ddd]" />
          <span className="pl-0.5 text-[#c65cc0]">종가 단순 5</span>
          <span className="px-1 text-[#2a3c9c]">10</span>
          <span className="px-1 text-[#e0ac2a]">20</span>
          <span className="text-[#2f9158]">60</span>
          <span className="px-1 text-[#8a8a8a]">120</span>
          <i className="h-3 w-2 border-2 border-[#777] bg-[#ddd]" />
          <span className="px-1 text-[#d2301f]">상한가</span>
          <i className="h-3 w-2 border-2 border-[#777] bg-[#ddd]" />
          <span className="pl-0.5 text-[#1c2fc8]">하한가</span>
        </div>
        <svg viewBox="0 0 26 24" className="absolute top-[34px] left-2 h-6 w-[26px]"><path d="M1 1h24v22H1z" fill="#fff" stroke="#222" strokeWidth="2" /><path d="M5 5h16v14H5zM5 10h16M5 14h16M10 5v14M16 5v14" fill="none" stroke="#888" strokeWidth="1.5" /></svg>
      </div>
      <div className="mx-2 flex h-6 items-center border-t-2 border-[#a9a9a9] bg-[#dedede]">
        <button aria-label="처음" className="flex w-[26px] justify-end border-r-2 border-[#999] pr-2"><Tri dir="left" className="h-3.5 w-2 text-black" /></button>
        <ChartTools />
      </div>
    </section>
  )
}

function ChartTools() {
  return (
    <svg viewBox="2618 1801 652 22" className="ml-auto h-[22px] w-[652px]" fill="none" stroke="#555" strokeWidth="2">
      <path d="M2622 1802v20M2653 1802v20M2683 1802v20M2713 1802v20M2743 1802v20M2873 1802v20" stroke="#888" />
      <path d="M2638 1808l6 6-6 6zM2660 1813l8-6v12zM2668 1813l8-6v12zM2694 1808h10v12h-10zM2721 1807l8 6-8 6zM2729 1807l8 6-8 6z" fill="#000" stroke="none" />
      <path d="M2754 1809h112" stroke="#777" strokeWidth="4" />
      <path d="M2889 1804h16v18h-16zM2897 1812h10v10h-10zM2918 1804h14v12h-14zM2926 1810h14v12M2948 1806h20M2950 1810l8 10 8-10M2977 1806h26M2986 1806v16M2986 1814h14M3008 1808h22M3018 1808l-8 14M3018 1808l8 14M3044 1804v16l6-10 4 10M3066 1822l16-18M3074 1812l8 10M3097 1818l8-14h8v10l-8 6h-8zM3126 1822v-10l6-6h14v10l-6 6M3132 1806v8h10" stroke="#777" />
      <circle cx="3165" cy="1811" r="8" /><path d="M3170 1817l5 5" />
      <path d="M3188 1813h18M3218 1813h18M3227 1804v18" strokeWidth="4" />
      <path d="M3251 1822l5-16 5 16z" fill="#555" />
    </svg>
  )
}

/* ---------- order bar ---------- */

function OrderBar() {
  return (
    <footer className="flex h-[46px] items-stretch border-t-2 border-b-4 border-t-[#f2f2f2] border-b-[#c9c9c9] bg-[#d9d9d9] whitespace-nowrap [&>div]:pb-3">
      <div className="flex w-[632px] items-start gap-1 pl-2">
        <button aria-label="닫기" className="text-[#555]"><svg width="14" height="16" viewBox="0 0 14 16" stroke="currentColor" strokeWidth="2"><path d="M2 3l10 10M12 3L2 13" /></svg></button>
        <span className="mt-1 mr-1 ml-1"><Badge /></span>
        <Combo label="계좌" value="5074-7852" className="w-[140px] bg-[#e6e6e6]" />
        <input aria-label="비밀번호" type="password" className="-ml-1 h-[34px] w-[96px] border border-[#777] bg-[#dedede]" />
        <div className="flex">
          <Combo label="종목코드" value="317530" className="w-[106px]" />
          <Btn label="검색" className={clsx('-ml-px w-[34px]', face)}><Search size={22} color="#777" /></Btn>
        </div>
        <div className="-ml-1 flex h-[34px] w-[192px] items-center gap-0.5 overflow-hidden border border-[#909090] bg-[#f6f6f6]">
          <span className="flex h-full w-[27px] items-center justify-center bg-[#d0d0d0]">코</span>
          <span className="flex h-full w-[49px] items-center justify-center bg-[#d0d0d0]">40%</span>
          <span className="pl-1 text-[22px] text-[#8a1c53]">캐리소프트</span>
        </div>
      </div>
      <div className="ml-2.5 flex w-[520px] items-center gap-5 border-r-2 border-[#d8c0b8] bg-[#f5d3c8] pl-2"><span>보통</span><span>현재가</span><span className="pl-1.5">현100%</span></div>
      <div className="flex w-[524px] items-center gap-5 border-r-2 border-[#b9c5cc] bg-[#c7dcf2] pl-2"><span>보통</span><span>현재가</span><span className="pl-2.5">100%</span></div>
      <div className="flex w-[523px] items-center gap-7 border-r-2 border-[#ccccdd] bg-[#dfe3c6] pl-14"><span>현재가</span><span>잔량전부</span></div>
      <div className="flex w-[522px] items-center border-r-2 border-[#bbbbbb] bg-[#eddcc3] pl-[126px]">잔량전부</div>
      <div className="relative flex-1">
        <svg viewBox="0 0 24 30" className="absolute top-1.5 right-1.5 h-[30px] w-6 text-[#555]"><path d="M6 1h12v4l-2 2v8l4 4H4l4-4V7L6 5zM12 19v10" fill="currentColor" stroke="currentColor" /></svg>
        <svg viewBox="0 0 58 16" className="absolute -right-px -bottom-1 h-4 w-[58px]"><path d="M0 16Q8 1 29 1T58 16z" fill="#5cb4f0" /><path d="M20 10h8v6h-8zM31 10h8v6h-8z" fill="#fff" /></svg>
      </div>
    </footer>
  )
}

export default function App() {
  return (
    <div className="relative min-h-screen w-full overflow-hidden bg-[#4b4d57] font-['Noto_Sans_Mono_CJK_KR','Noto_Sans_CJK_KR',sans-serif] text-[21px] leading-7 text-[#1c1c1c]">
      <VideoHeader />
      <AppToolbar />
      <div className="flex border-l-[5px] border-[#3c5190]">
        <main className="min-w-0 flex-1">
          <div className="grid h-[702px] grid-cols-[1089fr_1248fr_935fr] gap-1.5 pt-px pr-1.5 pl-0.5">
            <WatchList />
            <Ranking />
            <OrderBook />
          </div>
          <ChartPanel />
        </main>
        {/* neighbouring window at the edge */}
        <div className="flex w-[7px] shrink-0 flex-col overflow-hidden bg-[#d9d9d9]">
          <div className="h-[1046px]" />
          <div className="-mr-2 h-[46px] rounded-l-full bg-black" />
          <div className="h-4" />
          <div className="h-[54px] border-t-2 border-l-2 border-black bg-[#3fa0e8]" />
          <div className="h-[52px] border-l-2 border-black bg-[#ffd21f]" />
          <div className="h-[263px] border-l-2 border-black bg-white" />
          <div className="h-[107px] border-l-2 border-black bg-[#555555]" />
          <div className="h-7 border-l-2 border-black bg-[#46a9f5]" />
          <div className="flex-1 border-b-2 border-l-2 border-black bg-[#e6379b]" />
        </div>
      </div>
      <OrderBar />
      {/* shade behind the player controls */}
      <div className="pointer-events-none absolute inset-x-0 bottom-0 h-[680px] bg-gradient-to-b from-transparent via-black/12 to-black/28" />
    </div>
  )
}
